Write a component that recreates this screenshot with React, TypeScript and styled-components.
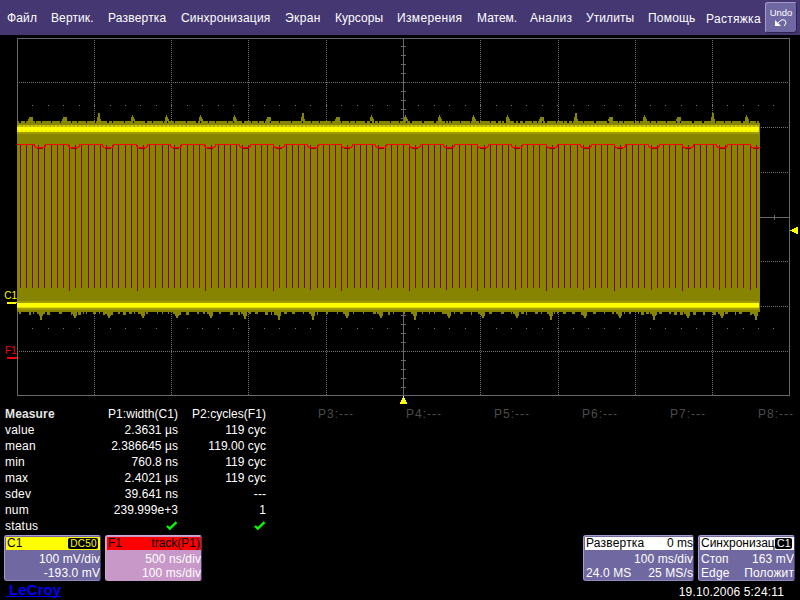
import React from "react";
import styled, { createGlobalStyle } from "styled-components";

const Global = createGlobalStyle`
  * { box-sizing: border-box; }
  body { margin: 0; background: #000; }
`;

const Screen = styled.div`
  width: 800px;
  height: 600px;
  overflow: hidden;
  display: flex;
  flex-direction: column;
  background: #000;
  color: #fff;
  font: 12px/16px "Liberation Sans", Arial, sans-serif;
  white-space: pre;
`;

const MenuBar = styled.nav`
  height: 35px;
  flex: none;
  display: flex;
  background: #443772;
  padding-left: 7px;
`;

const MenuItem = styled.span<{ $w: number; $ls: number; $low?: boolean }>`
  flex: none;
  width: ${(p) => p.$w}px;
  padding-top: ${(p) => (p.$low ? 11 : 10)}px;
  letter-spacing: ${(p) => p.$ls}px;
`;

const UndoButton = styled.button`
  width: 32px;
  height: 31px;
  margin-top: 2px;
  padding: 3px 0 0;
  border: 1px solid #a39bd0;
  border-right-color: #2b2350;
  border-bottom-color: #2b2350;
  border-radius: 3px;
  background: #7068a2;
  color: #fff;
  display: flex;
  flex-direction: column;
  align-items: center;
  font: 9.5px/14px "Liberation Sans", Arial, sans-serif;
  svg { display: block; margin-top: -1px; }
`;

const Plot = styled.svg`
  flex: none;
  display: block;
  width: 800px;
  height: 371px;
  font: 10px "Liberation Sans", Arial, sans-serif;
`;

const Measure = styled.section`
  flex: none;
  height: 128px;
  padding-left: 5px;
  display: grid;
  grid-template-columns: 85px repeat(8, 88px);
  grid-auto-rows: 16px;
`;

const Label = styled.span<{ $bold?: boolean }>`
  grid-column: 1;
  font-weight: ${(p) => (p.$bold ? 700 : 400)};
  color: ${(p) => (p.$bold ? "#e4e4e4" : "#fff")};
  letter-spacing: ${(p) => (p.$bold ? 0.15 : 0.2)}px;
`;

const Value = styled.span<{ $dim?: boolean; $ls?: number }>`
  text-align: right;
  color: ${(p) => (p.$dim ? "#4c4c4c" : "#fff")};
  letter-spacing: ${(p) => p.$ls ?? 0.05}px;
  svg { display: inline-block; margin: 3px 0 0; vertical-align: top; }
`;

const Descriptors = styled.div`
  flex: none;
  height: 47px;
  padding: 1px 5px 0 4px;
  display: flex;
  align-items: flex-start;
  gap: 4px;
`;

const Box = styled.div<{ $pink?: boolean; $w?: number }>`
  width: ${(p) => p.$w ?? 97}px;
  height: 46px;
  flex: none;
  overflow: hidden;
  border: 1px solid ${(p) => (p.$pink ? "#d0a8d8" : "#a49cd2")};
  border-right-color: #453a78;
  border-bottom-color: ${(p) => (p.$pink ? "#c898c8" : "#9088c0")};
  border-radius: 3px;
  background: ${(p) => (p.$pink ? "#c898c8" : "#7068a0")};
`;

const Gap = styled.div`flex: 1;`;

const Head = styled.div<{ $bg: string }>`
  height: 13px;
  margin: 1px 0 0 1px;
  padding-left: 1px;
  display: flex;
  justify-content: space-between;
  align-items: center;
  background: ${(p) => p.$bg};
  color: #000;
  line-height: 13px;
`;

const Badge = styled.span`
  flex: none;
  height: 11px;
  margin-right: 2px;
  padding: 0 1px 0 2px;
  border-radius: 2px;
  background: #000;
  color: #fff;
  font-size: 10.5px;
  line-height: 11px;
  letter-spacing: 0.3px;
`;

const BadgeYellow = styled(Badge)`
  color: #ff0;
  font-size: 10px;
`;

const HeadText = styled.span<{ $ls?: number; $end?: boolean }>`
  letter-spacing: ${(p) => p.$ls ?? 0}px;
  padding-right: ${(p) => (p.$end ? 1 : 0)}px;
`;

const Line = styled.div<{ $first?: boolean; $end?: boolean; $ls?: number }>`
  height: 14px;
  margin-top: ${(p) => (p.$first ? 2 : 0)}px;
  padding-left: 2px;
  display: flex;
  justify-content: ${(p) => (p.$end ? "flex-end" : "space-between")};
  line-height: 15px;
  letter-spacing: ${(p) => p.$ls ?? 0.1}px;
`;

const Footer = styled.footer`
  flex: 1;
  display: flex;
  justify-content: space-between;
  padding: 0 16px 0 6px;
`;

const Brand = styled.span`
  height: 16px;
  color: #0000fa;
  font-size: 15px;
  font-weight: 700;
  line-height: 18px;
  letter-spacing: 0.1px;
  padding: 0 0 0 3px;
  border-bottom: 1px solid #0000fa;
`;

const Clock = styled.span`
  padding-top: 3px;
  letter-spacing: 0.15px;
`;

const menu: [string, number, number][] = [
  ["Файл", 44, 0.15],
  ["Вертик.", 57, 0.1],
  ["Развертка", 73, 0.2],
  ["Синхронизация", 104, 0.2],
  ["Экран", 50, 0.4],
  ["Курсоры", 62, 0.1],
  ["Измерения", 80, 0.35],
  ["Матем.", 53, 0],
  ["Анализ", 56, 0.3],
  ["Утилиты", 62, 0.1],
  ["Помощь", 58, 0.2],
  ["Растяжка", 59, 0.3],
];

const rows: [string, string, string][] = [
  ["value", "2.3631 µs", "119 cyc"],
  ["mean", "2.386645 µs", "119.00 cyc"],
  ["min", "760.8 ns", "119 cyc"],
  ["max", "2.4021 µs", "119 cyc"],
  ["sdev", "39.641 ns", "---"],
  ["num", "239.999e+3", "1"],
];

const columnsX = [94, 171, 248, 326, 403, 480, 558, 635, 712];
const rowsY = [82, 127, 172, 217, 261, 306, 351];

const longer = new Map<number, number>([
  [69, 291], [137, 291], [205, 291], [273, 291], [310, 290], [341, 291],
  [378, 290], [409, 291], [446, 290], [477, 291], [515, 290], [546, 291],
  [583, 290], [614, 291], [651, 290], [682, 291], [719, 290], [750, 290],
]);

const edges: number[] = [
  20, 26, 32, 38, 44, 51, 57, 63, 69, 75, 81, 88, 94, 100, 106, 112, 118, 125,
  131, 137, 143, 149, 155, 162, 168, 174, 180, 187, 193, 199, 205, 211, 218,
  224, 230, 236, 242, 248, 255, 261, 267, 273, 279, 286, 292, 298, 304, 310,
  317, 323, 329, 335, 341, 347, 354, 360, 366, 372, 378, 385, 391, 397, 403,
  409, 415, 422, 428, 434, 440, 446, 452, 459, 465, 471, 477, 484, 490, 496,
  502, 508, 515, 521, 527, 533, 539, 546, 552, 558, 564, 570, 577, 583, 589,
  595, 601, 607, 614, 620, 626, 632, 638, 644, 651, 657, 663, 669, 675, 682,
  688, 694, 700, 706, 713, 719, 725, 731, 737, 743, 750, 756,
];

const dips = Array.from({ length: 22 }, (_, k) => Math.round(33.8 + 34.12 * k));

const topPeaks = [117, 117, 113, 115, 115, 115, 115, 117, 113, 117, 115, 115, 115, 115, 115, 117, 113, 117, 115, 117, 113, 115];
const lowPeaks = [320, 318, 318, 318, 318, 318, 319, 320, 320, 318, 318, 320, 318, 318, 318, 320, 318, 318, 320, 318, 318, 320];

const rect = (x: number, y: number, w: number, h: number) => `M${x} ${y}h${w}v${h}h${-w}z`;

function noisePath(): string {
  let d = rect(17, 123, 743, 189);
  let seed = 7;
  const rnd = () => (seed = (seed * 16807) % 2147483647) / 2147483647;
  let x = 17;
  while (x < 758) {
    const w = 2 + Math.floor(rnd() * 10);
    d += rect(x, 121, Math.min(w, 759 - x), 2);
    x += w + 1 + Math.floor(rnd() * 1.3);
  }
  x = 19;
  while (x < 755) {
    const w = 1 + Math.floor(rnd() * 3);
    d += rect(x, 312, w, rnd() > 0.75 ? 3 : 2);
    x += w + 2 + Math.floor(rnd() * 8);
  }
  topPeaks.forEach((y, k) => {
    const c = Math.round(29.5 + 34.12 * k);
    if (y === 117) d += rect(c - 2, 119, 5, 2) + rect(c - 1, 117, 4, 2);
    else d += rect(c - 1, 117, 3, 4) + rect(c, y, y === 113 ? 2 : 1, 4) + rect(c + 1, 119, 2, 2);
  });
  lowPeaks.forEach((y, k) => {
    const c = Math.round(39.5 + 34.06 * k);
    d += rect(c - 3, 312, 6, 2) + rect(c - 1, 314, 4, 2) + rect(c, 316, 2, y - 316);
  });
  return d;
}

function trackPath(): string {
  let d = "M17 145";
  dips.forEach((x) => {
    d += `H${x}V147H${x + 1}V148H${Math.min(x + 10, 760)}`;
    if (x + 11 < 760) d += `V147H${x + 11}V145`;
  });
  return d;
}

const subX = Array.from({ length: 49 }, (_, i) => Math.floor(17.4 + 15.44 * (i + 1)));

function Scope() {
  return (
    <Plot viewBox="0 35 800 371" shapeRendering="crispEdges">
      <g stroke="#686868" fill="none">
        <path d="M17.5 38.5H789.5V395.5H17.5Z M403.5 38V395 M17 217.5H789" />
        <g stroke="#727272" strokeDasharray="1 1">
          {columnsX.filter((x) => x !== 403).map((x) => (
            <path key={x} d={`M${x + 0.5} 40V395`} />
          ))}
          {rowsY.filter((y) => y !== 217).map((y) => (
            <path key={y} d={`M19 ${y + 0.5}H789`} />
          ))}
        </g>
        <path
          d={Array.from({ length: 39 }, (_, i) => `M401 ${Math.floor(38 + 8.95 * (i + 1)) + 0.5}h5`).join("") + "M774.5 215v5"}
        />
      </g>
      <path
        fill="#727272"
        d={subX.map((x) => rect(x, 105, 1, 1) + rect(x, 328, 1, 1)).join("")}
      />
      <path fill="#868400" d={noisePath()} />
      <path fill="#d0cc00" d={rect(17, 125, 742, 2)} />
      <path stroke="#b8b400" strokeWidth="2" strokeDasharray="2 2" d="M17 126H759" />
      <path fill="#ffff00" d={rect(17, 127, 742, 5) + rect(17, 303, 742, 4)} />
      <path stroke="#eeea00" strokeWidth="2" strokeDasharray="2 2" d="M17 131H759" />
      <path fill="#dedc00" d={rect(17, 307, 742, 1)} />
      <path fill="#a09c00" d={rect(17, 132, 742, 2) + rect(17, 301, 742, 2) + rect(17, 308, 742, 2)} />
      <path
        stroke="#880000"
        d={edges.map((x) => `M${x + 0.5} 145V${longer.get(x) ?? 288}`).join("")}
      />
      <path
        fill="#990000"
        d={dips.map((x) => rect(x, 145, 1, 2) + rect(x + 3, 148, Math.min(6, 757 - x), 1)).join("")}
      />
      <path stroke="#ff0000" fill="none" d={trackPath()} transform="translate(0,-0.5)" />
      <g fill="#ffff00">
        <path d="M403 396h1v2h1v2h1v2h1v2h-7v-2h1v-2h1v-2h1z" />
        <path d="M790 230h2v-1h2v-1h2v-1h2v7h-2v-1h-2v-1h-2v-1h-2z" />
        <path d="M7 302h10v1h-1v1h-9z" />
        <text x="4.3" y="299">C1</text>
      </g>
      <g fill="#ff0000">
        <path d="M7 357h10v2h-10z" />
        <text x="5" y="354">F1</text>
      </g>
    </Plot>
  );
}

const Check = () => (
  <svg width="12" height="10" viewBox="0 0 12 10">
    <path d="M1 5L3.8 7.6L10.5 1.2" stroke="#00ff00" strokeWidth="2.3" fill="none" />
  </svg>
);

export default function App() {
  return (
    <>
      <Global />
      <Screen>
        <MenuBar>
          {menu.map(([t, w, ls], i) => (
            <MenuItem key={t} $w={w} $ls={ls} $low={i === 11}>{t}</MenuItem>
          ))}
          <UndoButton>
            Undo
            <svg width="12" height="8" viewBox="0 0 12 8">
              <path d="M0 1V7H6Z" fill="#fff" />
              <path d="M3 4L6 1.2Q8 .2 10 1.3Q12.5 3.8 9.2 7" stroke="#fff" fill="none" />
            </svg>
          </UndoButton>
        </MenuBar>
        <Scope />
        <Measure>
          <Label $bold>Measure</Label>
          <Value>P1:width(C1)</Value>
          <Value>P2:cycles(F1)</Value>
          {[3, 4, 5, 6, 7, 8].map((n) => (
            <Value key={n} $dim $ls={1}>{`P${n}:---`}</Value>
          ))}
          {rows.map(([name, a, b]) => (
            <React.Fragment key={name}>
              <Label>{name}</Label>
              <Value>{a}</Value>
              <Value>{b}</Value>
            </React.Fragment>
          ))}
          <Label>status</Label>
          <Value><Check /></Value>
          <Value><Check /></Value>
        </Measure>
        <Descriptors>
          <Box>
            <Head $bg="#ffff00"><HeadText>C1</HeadText><BadgeYellow>DC50</BadgeYellow></Head>
            <Line $first $end>100 mV/div</Line>
            <Line $end>-193.0 mV</Line>
          </Box>
          <Box $pink>
            <Head $bg="#ff0000"><HeadText>F1</HeadText><HeadText $end>track(P1)</HeadText></Head>
            <Line $first $end>500 ns/div</Line>
            <Line $end>100 ms/div</Line>
          </Box>
          <Gap />
          <Box $w={111}>
            <Head $bg="#ffffff"><HeadText $ls={0.2}>Развертка</HeadText><HeadText>0 ms</HeadText></Head>
            <Line $first $end>100 ms/div</Line>
            <Line><span>24.0 MS</span><span>25 MS/s</span></Line>
          </Box>
          <Box>
            <Head $bg="#ffffff"><HeadText $ls={0}>Синхронизац</HeadText><Badge>C1</Badge></Head>
            <Line $first><span>Стоп</span><span>163 mV</span></Line>
            <Line><span>Edge</span><span>Положит</span></Line>
          </Box>
        </Descriptors>
        <Footer>
          <Brand>LeCroy</Brand>
          <Clock>19.10.2006 5:24:11</Clock>
        </Footer>
      </Screen>
    </>
  );
}
